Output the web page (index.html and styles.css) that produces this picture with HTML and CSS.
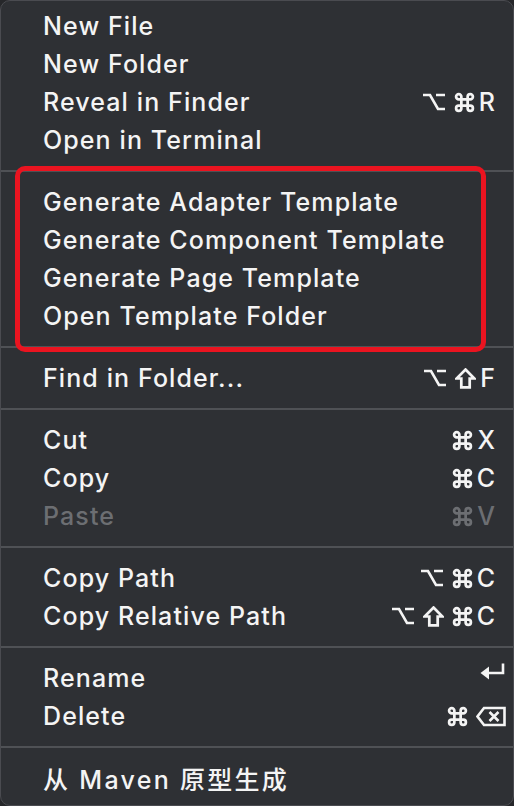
FILE: index.html
```html
<!DOCTYPE html>
<html>
<head>
<meta charset="utf-8">
<link rel="stylesheet" href="styles.css">
</head>
<body>
<div class="menu">
  <div class="section">
    <div class="row"><span class="label">New File</span></div>
    <div class="row"><span class="label">New Folder</span></div>
    <div class="row"><span class="label">Reveal in Finder</span>
      <span class="keys">
        <svg class="k-opt" viewBox="0 0 24 20"><path d="M1 3H8L16 17H23M14 3H23"/></svg>
        <svg class="k-cmd" viewBox="0 0 20 20"><path d="M7 7V4.5A2.5 2.5 0 1 0 4.5 7H15.5A2.5 2.5 0 1 0 13 4.5V15.5A2.5 2.5 0 1 0 15.5 13H4.5A2.5 2.5 0 1 0 7 15.5Z"/></svg>
        <span class="key">R</span>
      </span>
    </div>
    <div class="row"><span class="label">Open in Terminal</span></div>
  </div>
  <div class="sep"></div>
  <div class="section highlighted">
    <div class="row"><span class="label">Generate Adapter Template</span></div>
    <div class="row"><span class="label">Generate Component Template</span></div>
    <div class="row"><span class="label">Generate Page Template</span></div>
    <div class="row"><span class="label">Open Template Folder</span></div>
    <div class="redbox"></div>
  </div>
  <div class="sep"></div>
  <div class="section">
    <div class="row"><span class="label">Find in Folder...</span>
      <span class="keys">
        <svg class="k-opt" viewBox="0 0 24 20"><path d="M1 3H8L16 17H23M14 3H23"/></svg>
        <svg class="k-shift" viewBox="0 0 20 20"><path d="M10 1.5L18.5 10H14V18.5H6V10H1.5Z"/></svg>
        <span class="key">F</span>
      </span>
    </div>
  </div>
  <div class="sep"></div>
  <div class="section">
    <div class="row"><span class="label">Cut</span>
      <span class="keys">
        <svg class="k-cmd" viewBox="0 0 20 20"><path d="M7 7V4.5A2.5 2.5 0 1 0 4.5 7H15.5A2.5 2.5 0 1 0 13 4.5V15.5A2.5 2.5 0 1 0 15.5 13H4.5A2.5 2.5 0 1 0 7 15.5Z"/></svg>
        <span class="key">X</span>
      </span>
    </div>
    <div class="row"><span class="label">Copy</span>
      <span class="keys">
        <svg class="k-cmd" viewBox="0 0 20 20"><path d="M7 7V4.5A2.5 2.5 0 1 0 4.5 7H15.5A2.5 2.5 0 1 0 13 4.5V15.5A2.5 2.5 0 1 0 15.5 13H4.5A2.5 2.5 0 1 0 7 15.5Z"/></svg>
        <span class="key">C</span>
      </span>
    </div>
    <div class="row disabled"><span class="label">Paste</span>
      <span class="keys">
        <svg class="k-cmd" viewBox="0 0 20 20"><path d="M7 7V4.5A2.5 2.5 0 1 0 4.5 7H15.5A2.5 2.5 0 1 0 13 4.5V15.5A2.5 2.5 0 1 0 15.5 13H4.5A2.5 2.5 0 1 0 7 15.5Z"/></svg>
        <span class="key">V</span>
      </span>
    </div>
  </div>
  <div class="sep"></div>
  <div class="section">
    <div class="row"><span class="label">Copy Path</span>
      <span class="keys">
        <svg class="k-opt" viewBox="0 0 24 20"><path d="M1 3H8L16 17H23M14 3H23"/></svg>
        <svg class="k-cmd" viewBox="0 0 20 20"><path d="M7 7V4.5A2.5 2.5 0 1 0 4.5 7H15.5A2.5 2.5 0 1 0 13 4.5V15.5A2.5 2.5 0 1 0 15.5 13H4.5A2.5 2.5 0 1 0 7 15.5Z"/></svg>
        <span class="key">C</span>
      </span>
    </div>
    <div class="row"><span class="label">Copy Relative Path</span>
      <span class="keys">
        <svg class="k-opt" viewBox="0 0 24 20"><path d="M1 3H8L16 17H23M14 3H23"/></svg>
        <svg class="k-shift" viewBox="0 0 20 20"><path d="M10 1.5L18.5 10H14V18.5H6V10H1.5Z"/></svg>
        <svg class="k-cmd" viewBox="0 0 20 20"><path d="M7 7V4.5A2.5 2.5 0 1 0 4.5 7H15.5A2.5 2.5 0 1 0 13 4.5V15.5A2.5 2.5 0 1 0 15.5 13H4.5A2.5 2.5 0 1 0 7 15.5Z"/></svg>
        <span class="key">C</span>
      </span>
    </div>
  </div>
  <div class="sep"></div>
  <div class="section">
    <div class="row"><span class="label">Rename</span>
      <span class="keys wide">
        <svg class="k-ret" viewBox="0 0 26 20"><path class="stroke" d="M23 1.5V11H7"/><path class="fill" d="M0.5 11L9 4.5V17.5Z"/></svg>
      </span>
    </div>
    <div class="row"><span class="label">Delete</span>
      <span class="keys wide">
        <svg class="k-cmd" viewBox="0 0 20 20"><path d="M7 7V4.5A2.5 2.5 0 1 0 4.5 7H15.5A2.5 2.5 0 1 0 13 4.5V15.5A2.5 2.5 0 1 0 15.5 13H4.5A2.5 2.5 0 1 0 7 15.5Z"/></svg>
        <svg class="k-del" viewBox="0 0 30 20"><path d="M8 1.5H28.5V18.5H8L1.5 10Z"/><path d="M13.5 5.5L22.5 14.5M22.5 5.5L13.5 14.5"/></svg>
      </span>
    </div>
  </div>
  <div class="sep"></div>
  <div class="section">
    <div class="row"><span class="label cjk">从 Maven 原型生成</span></div>
  </div>
</div>
</body>
</html>
```
FILE: styles.css
```css
html, body {
  margin: 0;
  padding: 0;
  background: #26272a;
}
body {
  width: 514px;
  height: 806px;
  overflow: hidden;
  font-family: "Inter", "Noto Sans CJK SC", sans-serif;
  color: #f4f4f4;
}
.menu {
  box-sizing: border-box;
  width: 514px;
  height: 806px;
  border: 1px solid #4a4b50;
  border-radius: 10px;
  background: #2e3034;
  padding: 6px 0 8px;
  display: flex;
  flex-direction: column;
}
.section {
  display: flex;
  flex-direction: column;
}
.highlighted {
  position: relative;
}
.redbox {
  position: absolute;
  left: 14px;
  right: 27px;
  top: -17px;
  bottom: -17px;
  border: 5px solid #ea1420;
  border-radius: 10px;
  pointer-events: none;
}
.row {
  height: 38px;
  display: flex;
  align-items: center;
  justify-content: space-between;
  padding: 0 18px 0 42px;
  font-size: 25px;
  font-weight: 500;
  letter-spacing: 1.1px;
}
.label {
  white-space: nowrap;
}
.cjk {
  letter-spacing: 2.3px;
}
.disabled {
  color: #6c6e72;
}
.sep {
  height: 2px;
  background: #4f5155;
  margin: 11px 0;
}
.keys {
  display: flex;
  align-items: center;
  gap: 8px;
}
.keys.wide {
  margin-right: -11px;
}
.key {
  font-size: 25px;
  line-height: 1;
  letter-spacing: 0;
  margin-left: -4px;
}
.keys svg {
  fill: none;
  stroke: currentColor;
  stroke-width: 2.6;
  stroke-linejoin: miter;
}
.k-opt { width: 24px; height: 20px; }
.k-cmd { width: 21px; height: 21px; }
.k-shift { width: 21px; height: 21px; }
.k-ret { width: 26px; height: 20px; margin-bottom: 12px; }
.k-ret .fill { fill: currentColor; stroke: none; }
.k-del { width: 30px; height: 21px; }
```
